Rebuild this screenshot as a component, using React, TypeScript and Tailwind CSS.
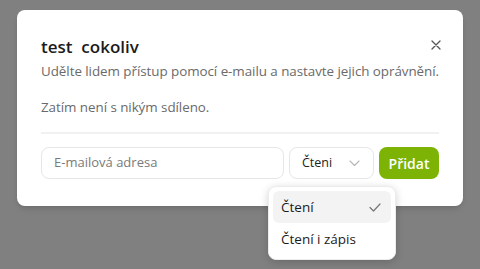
import React from 'react';

const App: React.FC = () => {
  return (
    <div
      className="w-[480px] h-[269px] bg-[#808080] pt-[10px] pl-[17px] overflow-hidden"
      style={{ fontFamily: '"Open Sans", "Noto Sans", sans-serif' }}
    >
      <div className="relative w-[446px] h-[196px] bg-white rounded-[8px] shadow-md px-6 pt-[26px]">
        <button className="absolute right-[20px] top-[28px] w-[14px] h-[14px] flex items-center justify-center text-[#555]">
          <svg className="w-[10px] h-[10px]" viewBox="0 0 10 10" fill="none" stroke="currentColor" strokeWidth="1.3" strokeLinecap="round">
            <path d="M1 1l8 8M9 1l-8 8" />
          </svg>
        </button>

        <h2 className="text-[17px] font-semibold text-[#1b1b1b] leading-[22px] whitespace-pre">test  cokoliv</h2>
        <p className="mt-[3px] text-[13.4px] text-[#6a6a6a] leading-[20px] tracking-[-0.05px] whitespace-nowrap">
          Udělte lidem přístup pomocí e-mailu a nastavte jejich oprávnění.
        </p>
        <p className="mt-[16px] text-[13.4px] text-[#6a6a6a] leading-[20px] tracking-[-0.05px]">Zatím není s nikým sdíleno.</p>

        <div className="mt-[15px] h-[2px] bg-[#f1f1f1]" />

        <div className="mt-[13px] flex gap-[5px] h-[32px]">
          <div className="w-[243px] border border-[#e6e6e6] rounded-[8px] flex items-center px-[12px] text-[13px] text-[#7a7a7a]">
            E-mailová adresa
          </div>
          <div className="relative w-[85px] border border-[#e6e6e6] rounded-[8px] flex items-center pl-[12px] text-[12.5px] text-[#222]">
            Čteni
            <svg className="absolute left-[59px] top-[12px] w-[11px] h-[7px] text-[#b5b5b5]" viewBox="0 0 11 7" fill="none" stroke="currentColor" strokeWidth="1.1" strokeLinecap="round" strokeLinejoin="round">
              <path d="M1 1l4.5 4.5L10 1" />
            </svg>
          </div>
          <button className="w-[60px] rounded-[8px] bg-[#7cb305] text-white text-[14px] font-semibold">Přidat</button>
        </div>

        <div className="absolute left-[251px] top-[176px] w-[128px] bg-white rounded-[8px] shadow-[0_2px_8px_rgba(0,0,0,0.18)] border border-[#ececec] p-[4px] z-10">
          <div className="h-[32px] rounded-[6px] bg-[#f3f3f3] flex items-center justify-between pl-[8px] pr-[10px] text-[13.5px] text-[#1b1b1b]">
            <span>Čtení</span>
            <svg className="w-[12px] h-[9px] text-[#777]" viewBox="0 0 12 9" fill="none" stroke="currentColor" strokeWidth="1.2" strokeLinecap="round" strokeLinejoin="round">
              <path d="M1 4.5l3.5 3.5L11 1" />
            </svg>
          </div>
          <div className="h-[32px] flex items-center pl-[8px] text-[13.5px] text-[#1b1b1b]">Čtení i zápis</div>
        </div>
      </div>
    </div>
  );
};

export default App;
